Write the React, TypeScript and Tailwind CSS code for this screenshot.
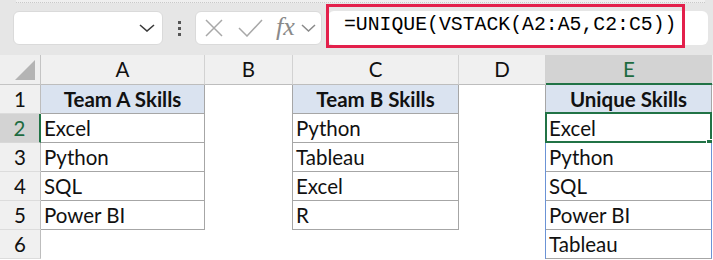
import React from 'react';

const cellFont = { fontFamily: 'Lato, "Noto Sans", sans-serif' };

const colA = ['Team A Skills', 'Excel', 'Python', 'SQL', 'Power BI', ''];
const colC = ['Team B Skills', 'Python', 'Tableau', 'Excel', 'R', ''];
const colE = ['Unique Skills', 'Excel', 'Python', 'SQL', 'Power BI', 'Tableau'];

function Toolbar() {
  return (
    <div className="h-[55px] bg-[#e6e6e6] relative">
      <div className="h-[3px] ml-[16px] mr-[8px] bg-[#efefef] border-b border-dotted border-[#c9c9c9]" />
      <div className="flex items-start mt-[8px] pl-[13px]">
        {/* name box */}
        <div className="w-[150px] h-[34px] bg-white rounded-[6px] border border-[#dadada] flex items-center justify-end pr-[7px]">
          <svg width="16" height="8" viewBox="0 0 16 8" fill="none">
            <path d="M1 1L8 7L15 1" stroke="#3a3a3a" strokeWidth="1.6" />
          </svg>
        </div>
        {/* kebab */}
        <div className="w-[32px] h-[34px] flex flex-col items-center justify-center gap-[3px]">
          <span className="block w-[3px] h-[3px] bg-[#555]" />
          <span className="block w-[3px] h-[3px] bg-[#555]" />
          <span className="block w-[3px] h-[3px] bg-[#555]" />
        </div>
        {/* cancel / enter / fx */}
        <div className="w-[127px] h-[34px] bg-white rounded-[6px] border border-[#dadada] flex items-center pl-[8px]">
          <svg width="20" height="18" viewBox="0 0 20 18" fill="none">
            <path d="M2 1L18 17M18 1L2 17" stroke="#a8a8a8" strokeWidth="1.5" />
          </svg>
          <svg className="ml-[14px]" width="25" height="18" viewBox="0 0 25 18" fill="none">
            <path d="M1 9L9 17L24 1" stroke="#a8a8a8" strokeWidth="1.5" />
          </svg>
          <span
            className="ml-[13px] italic text-[26px] leading-none text-[#8a8a8a] -mt-[2px]"
            style={{ fontFamily: '"Liberation Serif", serif' }}
          >
            fx
          </span>
          <svg className="ml-[6px]" width="15" height="8" viewBox="0 0 15 8" fill="none">
            <path d="M1 1L7.5 7L14 1" stroke="#8a8a8a" strokeWidth="1.5" />
          </svg>
        </div>
        {/* formula input */}
        <div className="ml-[6px] w-[380px] h-[34px] bg-white rounded-[6px] flex items-start">
          <div className="-mt-[7px] -ml-[2px] w-[359px] h-[44px] border-[3.5px] border-[#e3204b] flex items-center pl-[15px]">
            <span
              className="text-[19.8px] text-black leading-none"
              style={{ fontFamily: '"Liberation Mono", monospace' }}
            >
              =UNIQUE(VSTACK(A2:A5,C2:C5))
            </span>
          </div>
        </div>
      </div>
    </div>
  );
}

function Grid() {
  const rows = [1, 2, 3, 4, 5, 6];
  return (
    <div
      className="grid grid-cols-[41px_164px_88px_166px_87px_166px_1fr] grid-rows-[30px_repeat(6,29px)] text-[20.5px] text-[#111]"
      style={cellFont}
    >
      {/* column headers */}
      <div className="bg-[#efefef] border-r border-b border-[#c4c4c4] relative">
        <svg className="absolute left-[14px] top-[4px]" width="22" height="22" viewBox="0 0 22 22">
          <path d="M21 1V21H1Z" fill="#b4b4b4" />
        </svg>
      </div>
      {['A', 'B', 'C', 'D'].map((c) => (
        <div
          key={c}
          className="bg-[#f0f0f0] border-r border-r-[#d2d2d2] border-b border-b-[#bdbdbd] flex items-center justify-center"
        >
          {c}
        </div>
      ))}
      <div className="bg-[#d3d3d3] border-b-2 border-[#217346] flex items-center justify-center text-[#1d6b40]">
        E
      </div>
      <div className="bg-[#f0f0f0] border-b border-[#bdbdbd]" />

      {rows.map((r) => {
        const i = r - 1;
        const inTable = r <= 5;
        return (
          <React.Fragment key={r}>
            {r === 2 ? (
              <div className="bg-[#d3d3d3] border-r-2 border-r-[#217346] border-b border-b-[#d8d8d8] flex items-center justify-center text-[#1d6b40]">
                {r}
              </div>
            ) : (
              <div className="bg-[#f0f0f0] border-r border-r-[#bdbdbd] border-b border-b-[#dcdcdc] flex items-center justify-center">
                {r}
              </div>
            )}
            {/* A */}
            {inTable ? (
              <div
                className={
                  r === 1
                    ? 'bg-[#dae3f0] border-r border-b border-[#a6a6a6] flex items-center justify-center font-bold'
                    : 'bg-white border-r border-b border-[#a6a6a6] flex items-center pl-[3px]'
                }
              >
                {colA[i]}
              </div>
            ) : (
              <div className="bg-white" />
            )}
            {/* B */}
            {inTable ? <div className="bg-white border-r border-[#a6a6a6]" /> : <div className="bg-white" />}
            {/* C */}
            {inTable ? (
              <div
                className={
                  r === 1
                    ? 'bg-[#dae3f0] border-r border-b border-[#a6a6a6] flex items-center justify-center font-bold'
                    : 'bg-white border-r border-b border-[#a6a6a6] flex items-center pl-[3px]'
                }
              >
                {colC[i]}
              </div>
            ) : (
              <div className="bg-white" />
            )}
            {/* D */}
            {r === 1 ? (
              <div className="bg-white border-r border-[#a6a6a6]" />
            ) : (
              <div className="bg-white border-r border-[#6b93d6]" />
            )}
            {/* E */}
            {r === 1 ? (
              <div className="bg-[#dae3f0] border-r border-b border-[#a6a6a6] flex items-center justify-center font-bold">
                {colE[i]}
              </div>
            ) : (
              <div className="relative bg-white border-r border-r-[#6b93d6] border-b border-b-[#a6a6a6] flex items-center pl-[3px]">
                {colE[i]}
                {r === 2 && (
                  <>
                    <div className="absolute -left-[1px] -top-[2px] -right-[1px] -bottom-[1px] border-2 border-[#217346]" />
                    <div className="absolute -right-[2px] -bottom-[4px] w-[7px] h-[7px] bg-[#217346] border border-white" />
                  </>
                )}
              </div>
            )}
            <div className="bg-white" />
          </React.Fragment>
        );
      })}
    </div>
  );
}

export default function App() {
  return (
    <div className="w-[713px] h-[260px] overflow-hidden bg-white">
      <Toolbar />
      <Grid />
    </div>
  );
}
